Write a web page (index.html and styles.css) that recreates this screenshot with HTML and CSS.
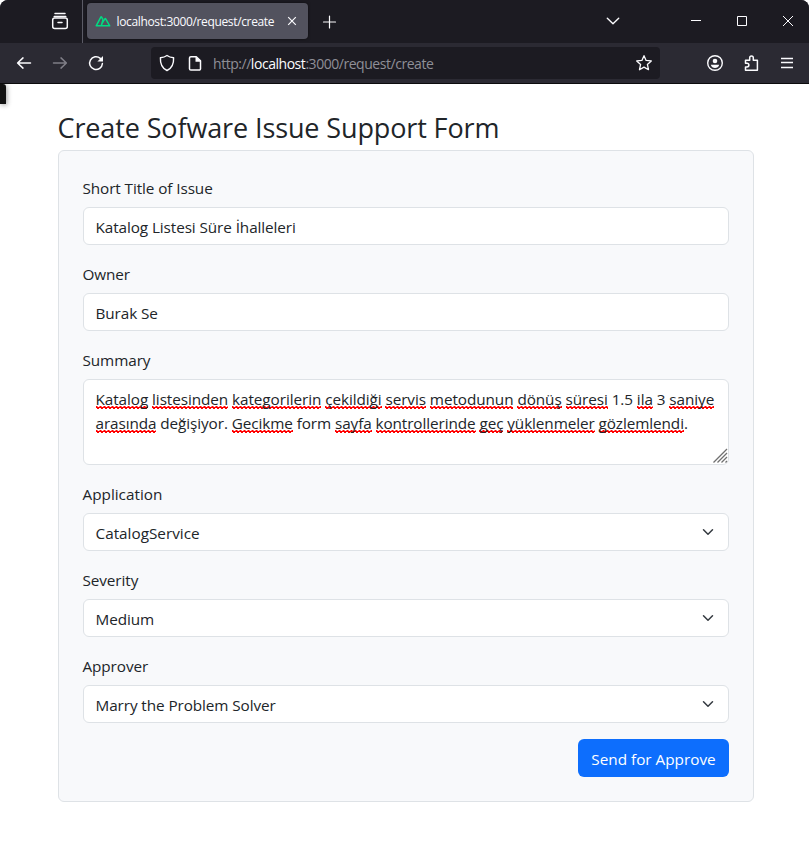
FILE: index.html
```html
<!DOCTYPE html>
<html lang="en">
<head>
<meta charset="utf-8">
<title>Create Request</title>
<link rel="stylesheet" href="styles.css">
</head>
<body>
<header class="browser">
  <div class="tabstrip">
    <svg class="icon archive" viewBox="0 0 20 20"><path d="M5 2.6h10M4.2 5.4h11.6"/><rect x="2.7" y="7" width="14.6" height="10.6" rx="2"/><path d="M8 11.4h4"/></svg>
    <div class="tab">
      <svg class="favicon" viewBox="0 0 16 12"><path d="M6.3 10.8H1.2L5.8 2.2Q6.2 1.5 6.6 2.2L8 4.7M6.3 10.8Q6.2 9.8 8.1 6.7L9.9 3.9Q10.3 3.3 10.7 3.9L14.7 10.8H6.3M6.3 10.8 8 4.7"/></svg>
      <span class="tab-title">localhost:3000/request/create</span>
      <svg class="tab-close" viewBox="0 0 10 10"><path d="M1.2 1.2l7.6 7.6M8.8 1.2L1.2 8.8"/></svg>
    </div>
    <svg class="icon plus" viewBox="0 0 20 20"><path d="M9.500 4v12M3.500 10h12"/></svg>
    <svg class="icon chevron" viewBox="0 0 20 20"><path d="M4.3 7.300l5.700 5.400 5.700-5.400"/></svg>
    <svg class="icon wm minimize" viewBox="0 0 20 20"><path d="M5 9.500h10"/></svg>
    <svg class="icon wm maximize" viewBox="0 0 20 20"><path d="M5.500 5.500h9v9h-9z"/></svg>
    <svg class="icon wm close" viewBox="0 0 20 20"><path d="M5 5l10 10M15 5L5 15"/></svg>
  </div>
  <div class="toolbar">
    <svg class="icon back" viewBox="0 0 20 20"><path d="M16.500 10H3.800M9 4.900L3.600 10 9 15.100"/></svg>
    <svg class="icon forward" viewBox="0 0 20 20"><path d="M3.500 10h12.700M11 4.900l5.400 5.100-5.400 5.100"/></svg>
    <svg class="icon reload" viewBox="0 0 20 20"><path d="M14.300 5.400A6.400 6.400 0 1 0 16.400 10.500"/><path class="fill" d="M17 3v5.600h-5.600z"/></svg>
    <div class="urlbar">
      <svg class="icon shield" viewBox="0 0 20 20"><path d="M10 2.500c2 1.500 4.200 2 6.600 2.200C16.900 11 14.800 15.300 10 17.500 5.200 15.300 3.100 11 3.400 4.700 5.800 4.500 8 4 10 2.500z"/></svg>
      <svg class="icon page" viewBox="0 0 20 20"><path d="M5.900 3.700h5.400l4.200 4.200v7.800a1.400 1.400 0 0 1-1.400 1.400H5.900a1.400 1.400 0 0 1-1.400-1.400V5.100a1.400 1.400 0 0 1 1.400-1.400z"/><path class="fill" d="M10.500 3.300l5.500 5.500h-5.500z"/></svg>
      <span class="url">http://<b>localhost</b>:3000/request/create</span>
      <svg class="icon star" viewBox="0 0 20 20"><path d="M10 2.700l2.100 4.700 5.200.5-3.900 3.500 1.100 5.300-4.500-2.600-4.500 2.600 1.100-5.300-3.900-3.500 5.200-.5z"/></svg>
    </div>
    <svg class="icon account" viewBox="0 0 20 20"><circle cx="10" cy="10" r="7.300"/><circle class="fill" cx="10" cy="8" r="2.300"/><path class="fill" d="M5.800 11.800h8.400q-1 3.200-4.200 3.200t-4.200-3.200z"/></svg>
    <svg class="icon puzzle" viewBox="0 0 20 20"><path d="M3.500 17.300V14H5a1.900 1.900 0 0 0 0-3.800H3.500V7.200h4.200V4.700a1.800 1.800 0 0 1 3.600 0v2.500h4.100v10.100z"/></svg>
    <svg class="icon menu" viewBox="0 0 20 20"><path d="M4 5.500h12M4 9.500h12M4 14.500h12"/></svg>
  </div>
</header>
<main class="container">
  <h1 class="heading">Create Sofware Issue Support Form</h1>
  <form class="card">
    <div class="field">
      <label class="label">Short Title of Issue</label>
      <div class="control">Katalog Listesi Süre İhalleleri</div>
    </div>
    <div class="field">
      <label class="label">Owner</label>
      <div class="control">Burak Se</div>
    </div>
    <div class="field">
      <label class="label">Summary</label>
      <div class="control textarea">
        <div class="line first"><u>Katalog</u> <u>listesinden</u> <u>kategorilerin</u> <u>çekildiği</u> <u>servis</u> <u>metodunun</u> <u>dönüş</u> <u>süresi</u> 1.5 <u>ila</u> 3 <u>saniye</u></div>
        <div class="line"><u>arasında</u> değişiyor. <u>Gecikme</u> form <u>sayfa</u> <u>kontrollerinde</u> <u>geç</u> <u>yüklenmeler</u> <u>gözlemlendi</u>.</div>
        <svg class="grip" viewBox="0 0 15 15"><path d="M.5 14.500L14 1M4.500 14.500L14 5M8.500 14.500L14 9M12.500 14.500L14 13"/></svg>
      </div>
    </div>
    <div class="field">
      <label class="label wide">Application</label>
      <div class="control select wide">CatalogService<svg class="caret" viewBox="0 0 16 16"><path d="M2 5l6 6 6-6"/></svg></div>
    </div>
    <div class="field">
      <label class="label">Severity</label>
      <div class="control select">Medium<svg class="caret" viewBox="0 0 16 16"><path d="M2 5l6 6 6-6"/></svg></div>
    </div>
    <div class="field">
      <label class="label">Approver</label>
      <div class="control select">Marry the Problem Solver<svg class="caret" viewBox="0 0 16 16"><path d="M2 5l6 6 6-6"/></svg></div>
    </div>
    <div class="actions"><button class="submit" type="button">Send for Approve</button></div>
  </form>
</main>
<div class="edge-shadow"></div>
</body>
</html>
```
FILE: styles.css
```css
* { box-sizing: border-box; }
body {
  margin: 0;
  height: 854px;
  overflow: hidden;
  background: #fff;
  color: #212529;
  font: 15.3px/24px "Open Sans", "Noto Sans", sans-serif;
}
svg { display: block; flex: none; fill: none; stroke: #fbfbfe; }
.icon { width: 20px; height: 20px; stroke-width: 1.5; stroke-linejoin: round; stroke-linecap: round; }
.fill { fill: #fbfbfe; stroke: none; }

.browser { height: 84px; background: #2b2a33; border-bottom: 1px solid #0c0c0d; border-radius: 8px 8px 0 0; overflow: hidden; }
.tabstrip { display: flex; align-items: center; height: 43px; background: #1c1b22; }
.archive { margin: -1px 0 0 50px; }
.tab {
  display: flex; align-items: center;
  width: 221px; height: 36px; margin: -1px 0 0 17px; padding-left: 8px;
  background: #52525e; border-radius: 4px; color: #fbfbfe;
  box-shadow: 0 0 3px #0008;
  font-size: 12px;
  position: relative;
}
.tab::before { content: ""; position: absolute; left: -5px; top: -4px; width: 1px; height: 44px; background: #5b5b66; }
.favicon { width: 16px; height: 12px; stroke: #00dc82; stroke-width: 1.5; stroke-linejoin: round; }
.tab-title { width: 171px; margin-left: 5px; padding: 1px 0 0 .5px; white-space: nowrap; letter-spacing: -.35px; }
.tab-close { width: 10px; height: 10px; stroke-width: 1.2; }
.plus { margin-left: 12px; stroke-width: 1.2; }
.chevron { margin: -2px 0 0 263px; stroke-width: 1.4; }
.wm { stroke-width: 1; stroke-linejoin: miter; stroke-linecap: butt; }
.minimize { margin: -1px 0 0 63px; }
.maximize, .close { margin: -1px 0 0 26px; }

.toolbar { display: flex; align-items: center; height: 40px; }
.back { margin-left: 14px; }
.forward { margin-left: 16px; stroke: #7f7e87; }
.reload { margin-left: 16px; }
.urlbar {
  display: flex; align-items: center;
  width: 509px; height: 32px; margin-left: 45px; padding-left: 6px;
  background: #1c1b22; border-radius: 4px; color: #8f8f97;
  font-size: 14px;
}
.shield { stroke-width: 1.4; }
.page { margin-left: 8px; }
.url { width: 421px; margin-left: 8px; padding-top: 2px; white-space: nowrap; letter-spacing: -.46px; }
.url b { color: #fbfbfe; font-weight: 400; }
.star { stroke-width: 1.3; }
.account { margin-left: 45px; stroke-width: 1.4; }
.puzzle { margin-left: 17px; }
.menu { margin-left: 15px; stroke-width: 1.4; stroke-linecap: butt; }

.container { padding: 27px 55px 0 58px; letter-spacing: -.09px; }
.heading { margin: 0 0 5px -.5px; font-size: 27px; line-height: 34px; font-weight: 400; white-space: nowrap; letter-spacing: -.12px; }
.card { height: 652px; padding: 24px; background: #f8f9fb; border: 1px solid #dee2e6; border-radius: 6px; }
.field { margin-bottom: 16px; }
.label { display: block; width: max-content; margin: 0 0 8px -.5px; height: 24px; line-height: 26px; }
.control { height: 38px; padding: 7px 11.5px 5px; border: 1px solid #dee2e6; border-radius: 6px; background: #fff; white-space: nowrap; }
.wide { letter-spacing: 0; }
.textarea { position: relative; height: 86px; }
.line { width: max-content; }
.first { letter-spacing: -.075px; }
/* Spelling squiggle: zigzag with a 4px period */
.line u {
  display: inline-block; height: 24px; text-decoration: none; vertical-align: top;
  background:
    repeating-linear-gradient(90deg, #f00 0 1px, #f008 1px 2px, transparent 2px 3px, #f008 3px 4px) 0 19px / 100% 1px no-repeat,
    repeating-linear-gradient(90deg, #f00 0 4px) 0 20px / 100% 1px no-repeat,
    repeating-linear-gradient(90deg, transparent 0 1px, #f00 1px 3px, transparent 3px 4px) 0 21px / 100% 1px no-repeat;
}
.grip { position: absolute; right: 0; bottom: 1px; width: 15px; height: 15px; stroke: #707070; stroke-width: 1.3; }
.select { display: flex; justify-content: space-between; padding-right: 12px; }
.caret { width: 16px; height: 12px; margin: 5px 0; stroke: #343a40; stroke-width: 2; stroke-linecap: round; stroke-linejoin: round; }
.actions { display: flex; justify-content: flex-end; }
.submit { width: 151px; height: 38px; padding: 1px 0 0; border: 0; border-radius: 6px; background: #0d6efd; color: #fff; font: inherit; white-space: nowrap; }
.edge-shadow { position: absolute; left: 0; top: 84px; width: 6px; height: 20px; background: #111; border-top-right-radius: 3px; box-shadow: 1px 1px 5px #0006; }
```
